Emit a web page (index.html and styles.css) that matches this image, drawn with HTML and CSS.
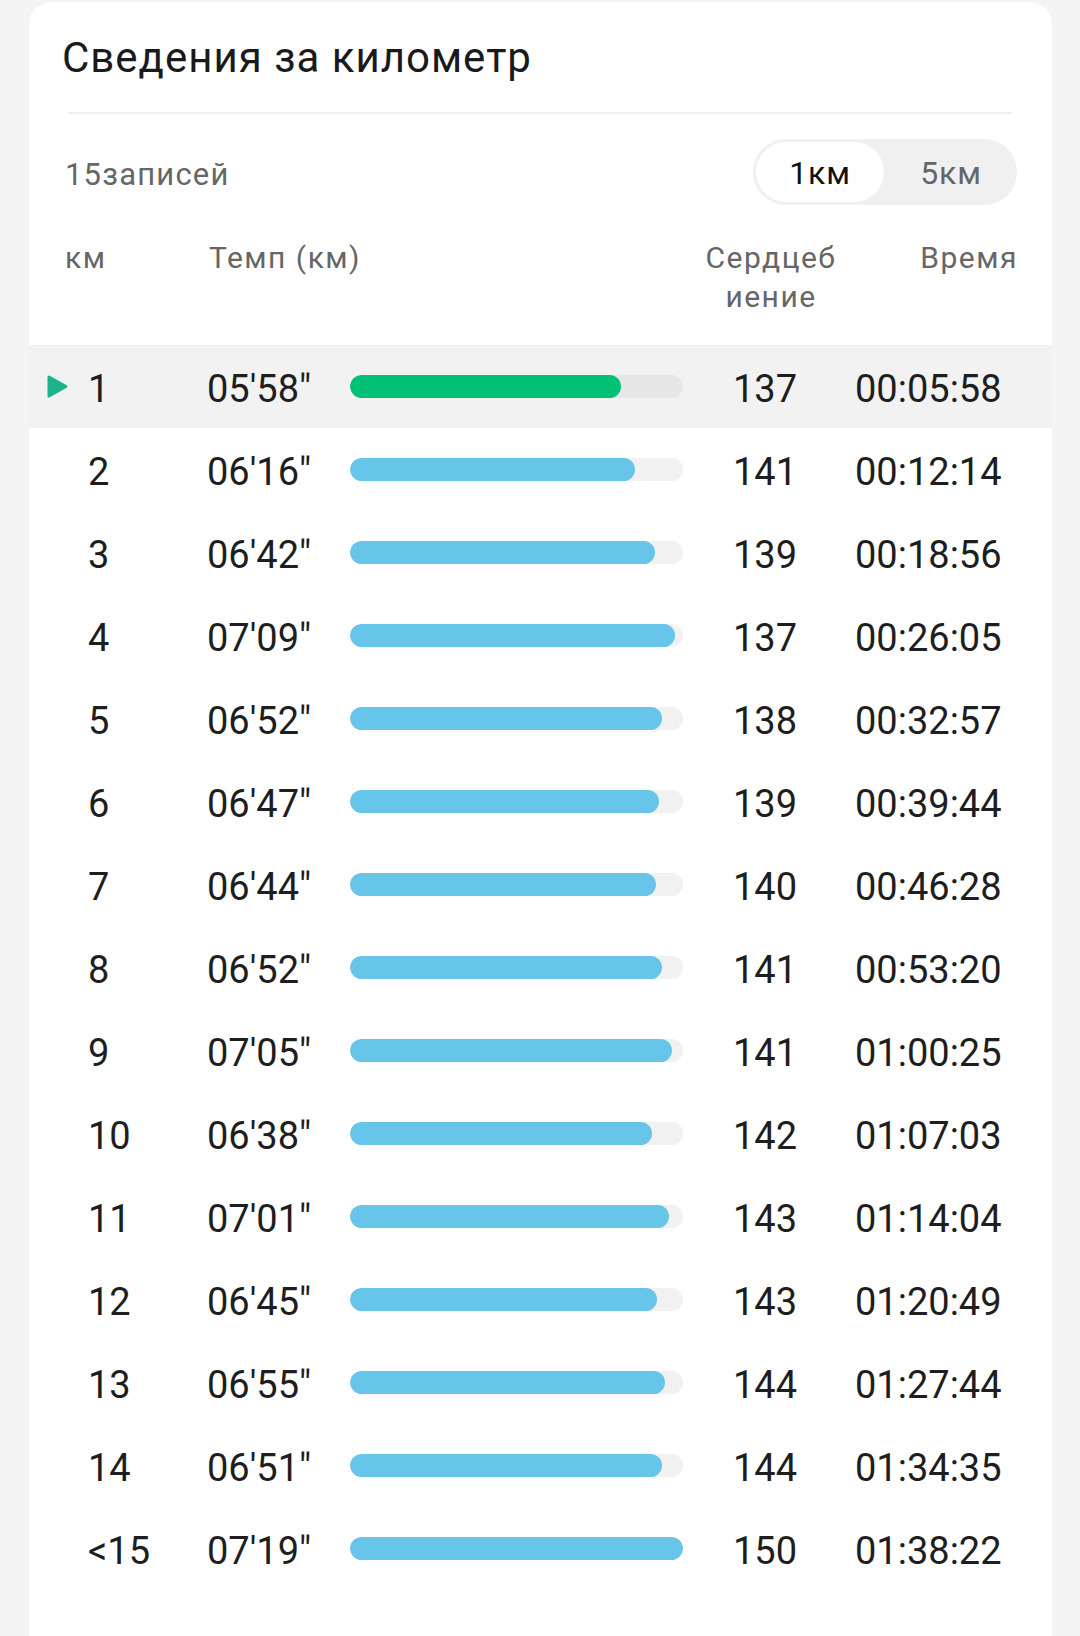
FILE: index.html
```html
<!DOCTYPE html>
<html lang="ru">
<head>
<meta charset="utf-8">
<title>Сведения за километр</title>
<link rel="stylesheet" href="styles.css">
</head>
<body>
<div class="card">
  <h1 class="title">Сведения за километр</h1>
  <div class="divider"></div>
  <div class="subhead">
    <span class="count">15записей</span>
    <div class="toggle">
      <span class="opt active">1км</span>
      <span class="opt">5км</span>
    </div>
  </div>
  <div class="thead">
    <span class="th th-km">км</span>
    <span class="th th-pace">Темп (км)</span>
    <span class="th th-hr">Сердцебиение</span>
    <span class="th th-time">Время</span>
  </div>
  <div class="rows">
    <div class="row selected">
      <span class="mark"><svg width="23" height="25" viewBox="0 0 23 25"><path d="M3 3 L20 12.5 L3 22 Z" fill="#1db38c" stroke="#1db38c" stroke-width="3" stroke-linejoin="round"/></svg></span>
      <span class="cell km">1</span><span class="cell pace">05'58"</span>
      <span class="track"><span class="fill green" style="width:81.5%"></span></span>
      <span class="cell hr">137</span><span class="cell time">00:05:58</span>
    </div>
    <div class="row"><span class="mark"></span><span class="cell km">2</span><span class="cell pace">06'16"</span><span class="track"><span class="fill" style="width:85.6%"></span></span><span class="cell hr">141</span><span class="cell time">00:12:14</span></div>
    <div class="row"><span class="mark"></span><span class="cell km">3</span><span class="cell pace">06'42"</span><span class="track"><span class="fill" style="width:91.6%"></span></span><span class="cell hr">139</span><span class="cell time">00:18:56</span></div>
    <div class="row"><span class="mark"></span><span class="cell km">4</span><span class="cell pace">07'09"</span><span class="track"><span class="fill" style="width:97.7%"></span></span><span class="cell hr">137</span><span class="cell time">00:26:05</span></div>
    <div class="row"><span class="mark"></span><span class="cell km">5</span><span class="cell pace">06'52"</span><span class="track"><span class="fill" style="width:93.8%"></span></span><span class="cell hr">138</span><span class="cell time">00:32:57</span></div>
    <div class="row"><span class="mark"></span><span class="cell km">6</span><span class="cell pace">06'47"</span><span class="track"><span class="fill" style="width:92.7%"></span></span><span class="cell hr">139</span><span class="cell time">00:39:44</span></div>
    <div class="row"><span class="mark"></span><span class="cell km">7</span><span class="cell pace">06'44"</span><span class="track"><span class="fill" style="width:92.0%"></span></span><span class="cell hr">140</span><span class="cell time">00:46:28</span></div>
    <div class="row"><span class="mark"></span><span class="cell km">8</span><span class="cell pace">06'52"</span><span class="track"><span class="fill" style="width:93.8%"></span></span><span class="cell hr">141</span><span class="cell time">00:53:20</span></div>
    <div class="row"><span class="mark"></span><span class="cell km">9</span><span class="cell pace">07'05"</span><span class="track"><span class="fill" style="width:96.8%"></span></span><span class="cell hr">141</span><span class="cell time">01:00:25</span></div>
    <div class="row"><span class="mark"></span><span class="cell km">10</span><span class="cell pace">06'38"</span><span class="track"><span class="fill" style="width:90.7%"></span></span><span class="cell hr">142</span><span class="cell time">01:07:03</span></div>
    <div class="row"><span class="mark"></span><span class="cell km">11</span><span class="cell pace">07'01"</span><span class="track"><span class="fill" style="width:95.9%"></span></span><span class="cell hr">143</span><span class="cell time">01:14:04</span></div>
    <div class="row"><span class="mark"></span><span class="cell km">12</span><span class="cell pace">06'45"</span><span class="track"><span class="fill" style="width:92.3%"></span></span><span class="cell hr">143</span><span class="cell time">01:20:49</span></div>
    <div class="row"><span class="mark"></span><span class="cell km">13</span><span class="cell pace">06'55"</span><span class="track"><span class="fill" style="width:94.5%"></span></span><span class="cell hr">144</span><span class="cell time">01:27:44</span></div>
    <div class="row"><span class="mark"></span><span class="cell km">14</span><span class="cell pace">06'51"</span><span class="track"><span class="fill" style="width:93.6%"></span></span><span class="cell hr">144</span><span class="cell time">01:34:35</span></div>
    <div class="row"><span class="mark"></span><span class="cell km">&lt;15</span><span class="cell pace">07'19"</span><span class="track"><span class="fill" style="width:100%"></span></span><span class="cell hr">150</span><span class="cell time">01:38:22</span></div>
  </div>
</div>
</body>
</html>
```
FILE: styles.css
```css
* { box-sizing: border-box; }
html, body { margin: 0; padding: 0; }
body {
  background: #f4f4f4;
  font-family: Roboto, "Noto Sans", "DejaVu Sans", sans-serif;
  color: #1e1e1e;
  padding-top: 2px;
}
.card {
  margin-left: 29px;
  width: 1023px;
  background: #fff;
  border-radius: 22px;
  padding: 31px 0 80px;
}
.title {
  margin: 0 0 0 33px;
  font-size: 42px;
  line-height: 50px;
  font-weight: 400;
  letter-spacing: 1px;
  color: #1a1a1a;
}
.divider {
  margin: 29px 41px 0 40px;
  height: 2px;
  background: #efefef;
}
.subhead {
  margin-top: 25px;
  padding: 0 35px 0 36px;
  display: flex;
  justify-content: space-between;
  align-items: center;
  height: 66px;
}
.count {
  font-size: 31px;
  color: #666;
  letter-spacing: 1.2px;
  padding-top: 4px;
}
.toggle {
  display: flex;
  width: 264px;
  height: 66px;
  padding: 3px;
  border-radius: 33px;
  background: #f0f0f0;
}
.opt {
  flex: 0 0 128px;
  display: flex;
  align-items: center;
  justify-content: center;
  font-size: 32px;
  letter-spacing: 0.8px;
  color: #666;
  border-radius: 30px;
  padding-top: 2px;
}
.opt.active {
  background: #fff;
  color: #111;
}
.opt:last-child { flex: 1; padding-left: 4px; }
.thead {
  margin-top: 33px;
  display: grid;
  grid-template-columns: 36px 144px 495px 134px 1fr;
  font-size: 30px;
  line-height: 39px;
  letter-spacing: 1.5px;
  color: #666;
  height: 78px;
}
.th-km { grid-column: 2; }
.th-pace { grid-column: 3; }
.th-hr {
  grid-column: 4;
  text-align: center;
  word-break: break-all;
}
.th-time {
  grid-column: 5;
  text-align: right;
  padding-right: 34px;
}
.rows { margin-top: 29px; }
.row {
  display: grid;
  grid-template-columns: 59px 119px 143px 333px 162px 1fr;
  align-items: center;
  height: 83px;
}
.row.selected { background: #f2f2f2; }
.mark {
  display: flex;
  align-items: center;
  padding-left: 17px;
  height: 25px;
}
.mark svg { display: block; }
.cell {
  font-size: 38px;
  line-height: 44px;
  padding-top: 5px;
  color: #1e1e1e;
}
.hr { text-align: center; padding-left: 2px; }
.time { padding-left: 10px; }
.track {
  display: block;
  height: 23px;
  border-radius: 12px;
  background: #f1f1f1;
  overflow: hidden;
}
.row.selected .track { background: #e7e7e7; }
.fill {
  display: block;
  height: 100%;
  border-radius: 12px;
  background: #66c5e8;
}
.fill.green { background: #00c176; }
```
